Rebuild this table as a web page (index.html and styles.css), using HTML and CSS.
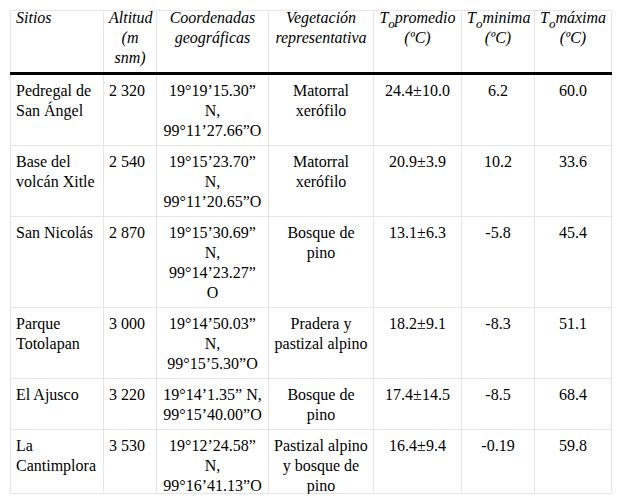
FILE: index.html
```html
<!DOCTYPE html>
<html lang="es">
<head>
<meta charset="utf-8">
<title>Sitios</title>
<link rel="stylesheet" href="styles.css">
</head>
<body>
<table class="data">
  <colgroup>
    <col class="c1"><col class="c2"><col class="c3"><col class="c4"><col class="c5"><col class="c6"><col class="c7">
  </colgroup>
  <thead>
    <tr>
      <th class="left"><div class="hd">Sitios</div></th>
      <th><div class="hd">Altitud (m snm)</div></th>
      <th><div class="hd">Coordenadas geográficas</div></th>
      <th><div class="hd">Vegetación representativa</div></th>
      <th><div class="hd">T<sub>o</sub>promedio (ºC)</div></th>
      <th><div class="hd">T<sub>o</sub>minima (ºC)</div></th>
      <th><div class="hd">T<sub>o</sub>máxima (ºC)</div></th>
    </tr>
  </thead>
  <tbody>
    <tr>
      <td class="left">Pedregal de San Ángel</td>
      <td class="left">2 320</td>
      <td>19°19’15.30” N, 99°11’27.66”O</td>
      <td>Matorral xerófilo</td>
      <td>24.4±10.0</td>
      <td>6.2</td>
      <td>60.0</td>
    </tr>
    <tr>
      <td class="left">Base del volcán Xitle</td>
      <td class="left">2 540</td>
      <td>19°15’23.70” N, 99°11’20.65”O</td>
      <td>Matorral xerófilo</td>
      <td>20.9±3.9</td>
      <td>10.2</td>
      <td>33.6</td>
    </tr>
    <tr>
      <td class="left">San Nicolás</td>
      <td class="left">2 870</td>
      <td>19°15’30.69” N, 99°14’23.27” O</td>
      <td>Bosque de pino</td>
      <td>13.1±6.3</td>
      <td>-5.8</td>
      <td>45.4</td>
    </tr>
    <tr>
      <td class="left">Parque Totolapan</td>
      <td class="left">3 000</td>
      <td>19°14’50.03” N, 99°15’5.30”O</td>
      <td>Pradera y pastizal alpino</td>
      <td>18.2±9.1</td>
      <td>-8.3</td>
      <td>51.1</td>
    </tr>
    <tr>
      <td class="left">El Ajusco</td>
      <td class="left">3 220</td>
      <td>19°14’1.35” N, 99°15’40.00”O</td>
      <td>Bosque de pino</td>
      <td>17.4±14.5</td>
      <td>-8.5</td>
      <td>68.4</td>
    </tr>
    <tr class="last">
      <td class="left"><div class="tight">La Cantimplora</div></td>
      <td class="left"><div class="tight">3 530</div></td>
      <td><div class="tight">19°12’24.58” N, 99°16’41.13”O</div></td>
      <td><div class="tight">Pastizal alpino y bosque de pino</div></td>
      <td><div class="tight">16.4±9.4</div></td>
      <td><div class="tight">-0.19</div></td>
      <td><div class="tight">59.8</div></td>
    </tr>
  </tbody>
</table>
</body>
</html>
```
FILE: styles.css
```css
html, body {
  margin: 0;
  padding: 0;
  background: #ffffff;
}

body {
  font-family: "Liberation Serif", "Times New Roman", serif;
  font-size: 16px;
  line-height: 20px;
  color: #000000;
}

.data {
  margin: 10px 0 0 10px;
  border-collapse: collapse;
  table-layout: fixed;
  width: 601px;
}

.c1 { width: 93px; }
.c2 { width: 53px; }
.c3 { width: 112px; }
.c4 { width: 105px; }
.c5 { width: 88px; }
.c6 { width: 73px; }
.c7 { width: 77px; }

.data th,
.data td {
  border: 1px solid #e6e6e6;
  vertical-align: top;
  text-align: center;
  padding: 6px 5px 4px 5px;
}

.data th {
  font-style: italic;
  font-weight: normal;
  padding-top: 0;
  padding-bottom: 4px;
  border-bottom: 3px solid #000000;
}

.data .hd {
  margin-top: -3px;
}

.data th.left,
.data td.left {
  text-align: left;
}

.data sub {
  font-size: 13px;
  line-height: 0;
  vertical-align: -5px;
}

.data .last td {
  padding-bottom: 0;
}

.data .tight {
  margin-bottom: -3px;
}
```
